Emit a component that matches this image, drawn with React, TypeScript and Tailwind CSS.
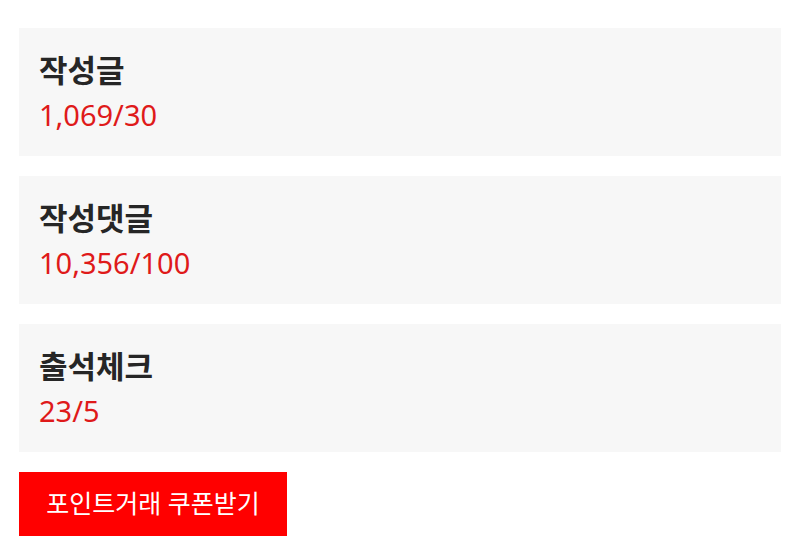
const stats = [
  { label: '작성글', value: '1,069/30' },
  { label: '작성댓글', value: '10,356/100' },
  { label: '출석체크', value: '23/5' },
];

export default function App() {
  return (
    <div
      className="w-[800px] h-[560px] bg-white pt-[28px] px-[19px]"
      style={{ fontFamily: '"Noto Sans", "Noto Sans CJK KR", sans-serif' }}
    >
      <div className="flex flex-col gap-[20px]">
        {stats.map((s) => (
          <div key={s.label} className="h-[128px] bg-[#f7f7f7] px-[20px] flex flex-col justify-center">
            <div className="text-[31px] leading-[40px] font-bold text-[#262626]">{s.label}</div>
            <div className="mt-[6px] text-[29px] leading-[38px] text-[#df1a1a]">{s.value}</div>
          </div>
        ))}
      </div>
      <button className="mt-[20px] w-[268px] h-[64px] bg-[#ff0000] text-white text-[25px] flex items-center justify-center">
        포인트거래 쿠폰받기
      </button>
    </div>
  );
}
